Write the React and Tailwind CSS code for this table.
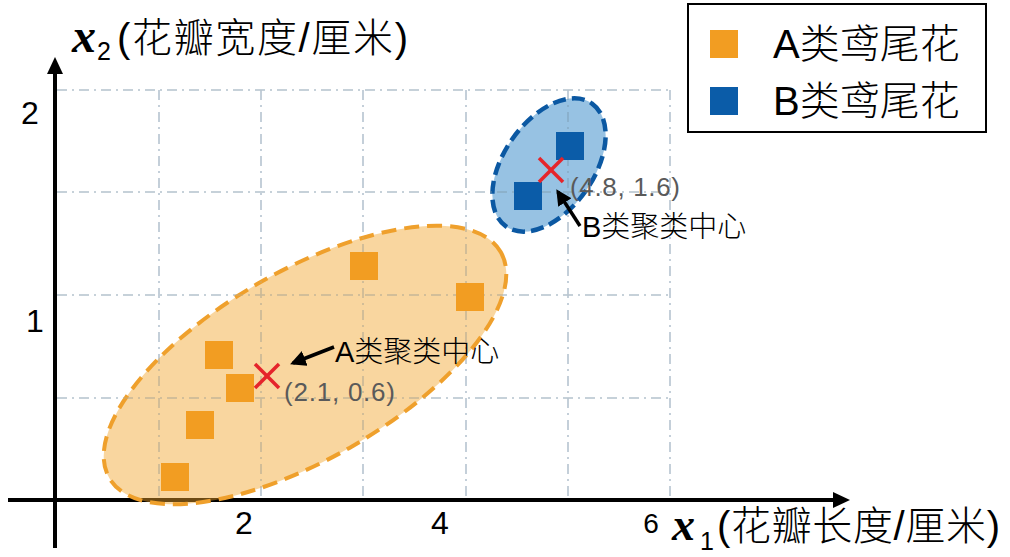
import React from 'react';

// 鸢尾花聚类示意图
const cjk = "font-['Liberation_Sans','Noto_Sans_CJK_SC',sans-serif] font-light";
const sans = "font-['Liberation_Sans',sans-serif]";
const math = "font-['Liberation_Serif','DejaVu_Serif',serif] font-bold italic";

const gridX = [159, 261, 363, 466, 568, 670];
const gridY = [90, 192, 295, 398];

const orangePts = [
  [219, 355], [240, 388], [200, 425], [175, 477], [470, 297], [364, 266],
];
const bluePts = [[570, 146], [528, 196]];

const Grid = ({ stroke, width, opacity = 1 }) => (
  <g stroke={stroke} strokeWidth={width} strokeDasharray="10 5 2 5" opacity={opacity}>
    {gridY.map((y) => (
      <line key={'h' + y} x1="57" y1={y} x2="670" y2={y} />
    ))}
    {gridX.map((x) => (
      <line key={'v' + x} x1={x} y1="90" x2={x} y2="497" />
    ))}
  </g>
);

const Cross = ({ x, y }) => (
  <g stroke="#e5242b" strokeWidth="3.5">
    <line x1={x - 12} y1={y - 12} x2={x + 12} y2={y + 12} />
    <line x1={x + 12} y1={y - 12} x2={x - 12} y2={y + 12} />
  </g>
);

const Legend = () => (
  <div className="absolute left-[687px] top-[3px] w-[300px] h-[130px] border-2 border-black bg-white flex flex-col pt-[10px] pl-[21px]">
    <div className="h-[57px] flex items-center gap-[35px]">
      <div className="w-[28px] h-[28px] bg-[#f29d22]" />
      <span className={`text-[40px] leading-none text-black ${cjk}`}>A类鸢尾花</span>
    </div>
    <div className="h-[57px] flex items-center gap-[35px]">
      <div className="w-[28px] h-[28px] bg-[#0b5ca8]" />
      <span className={`text-[40px] leading-none text-black ${cjk}`}>B类鸢尾花</span>
    </div>
  </div>
);

export default function App() {
  return (
    <div className="relative w-[1010px] h-[557px] bg-white overflow-hidden">
      <svg width="1010" height="557" viewBox="0 0 1010 557" className="block">
        <defs>
          <marker id="head" viewBox="0 0 10 10" refX="8" refY="5" markerWidth="4.5" markerHeight="4.5" orient="auto">
            <path d="M0 0 L10 5 L0 10 Z" fill="#000" />
          </marker>
        </defs>

        <Grid stroke="#bccfe5" width="1.6" />

        {/* 坐标轴 */}
        <line x1="8" y1="500" x2="836" y2="500" stroke="#000" strokeWidth="4" />
        <path d="M833 492 L850 500 L833 508 Z" fill="#000" />
        <line x1="55" y1="548" x2="55" y2="72" stroke="#000" strokeWidth="4" />
        <path d="M47 74 L55 57 L63 74 Z" fill="#000" />

        {/* 聚类椭圆 */}
        <ellipse cx="305" cy="365" rx="226" ry="94" transform="rotate(-30 305 365)"
          fill="#f2a52a" fillOpacity="0.45" stroke="#efa02c" strokeWidth="4" strokeDasharray="15 8" />
        <ellipse cx="549" cy="165" rx="75" ry="45" transform="rotate(-55 549 165)"
          fill="#2f86c8" fillOpacity="0.5" stroke="#0b58a2" strokeWidth="4.5" strokeDasharray="13 6" />

        {/* 网格透过椭圆 */}
        <Grid stroke="#b7b6a8" width="1.4" opacity="0.35" />

        {/* 样本点 */}
        {orangePts.map(([x, y]) => (
          <rect key={`o${x}`} x={x - 14} y={y - 14} width="28" height="28" fill="#f29d22" />
        ))}
        {bluePts.map(([x, y]) => (
          <rect key={`b${x}`} x={x - 14} y={y - 14} width="28" height="28" fill="#0b5ca8" />
        ))}

        <Cross x={267} y={376} />
        <Cross x={551} y={170} />

        {/* 箭头 */}
        <line x1="334" y1="347" x2="293" y2="363" stroke="#000" strokeWidth="3.5" markerEnd="url(#head)" />
        <line x1="580" y1="226" x2="558" y2="192" stroke="#000" strokeWidth="3.5" markerEnd="url(#head)" />

        {/* 注释文字 */}
        <text x="335" y="362" fill="#000" className={`text-[29px] ${cjk}`}>A类聚类中心</text>
        <text x="582" y="237" fill="#000" className={`text-[29px] ${cjk}`}>B类聚类中心</text>
        <text x="284" y="401" fill="#5a5a5a" textLength="111" className={`text-[26px] ${sans}`}>(2.1, 0.6)</text>
        <text x="570" y="196" fill="#5a5a5a" textLength="110" className={`text-[26px] ${sans}`}>(4.8, 1.6)</text>

        {/* 刻度 */}
        <g fill="#000" textAnchor="middle">
          <text x="30" y="124" className={`text-[32px] ${sans}`}>2</text>
          <text x="35" y="332" className={`text-[32px] ${sans}`}>1</text>
          <text x="244" y="534" className={`text-[32px] ${sans}`}>2</text>
          <text x="440" y="534" className={`text-[32px] ${sans}`}>4</text>
          <text x="651" y="533" className={`text-[28px] ${sans}`}>6</text>
        </g>

        {/* 轴标题 */}
        <text x="72" y="52" className={`text-[48px] ${math}`}>x</text>
        <text x="97" y="60" className={`text-[25px] ${sans}`}>2</text>
        <text x="117" y="52" textLength="291" className={`text-[40px] ${cjk}`}>(花瓣宽度/厘米)</text>

        <text x="672" y="540" className={`text-[46px] ${math}`}>x</text>
        <text x="700" y="550" className={`text-[25px] ${sans}`}>1</text>
        <text x="717" y="540" textLength="283" className={`text-[40px] ${cjk}`}>(花瓣长度/厘米)</text>
      </svg>
      <Legend />
    </div>
  );
}
